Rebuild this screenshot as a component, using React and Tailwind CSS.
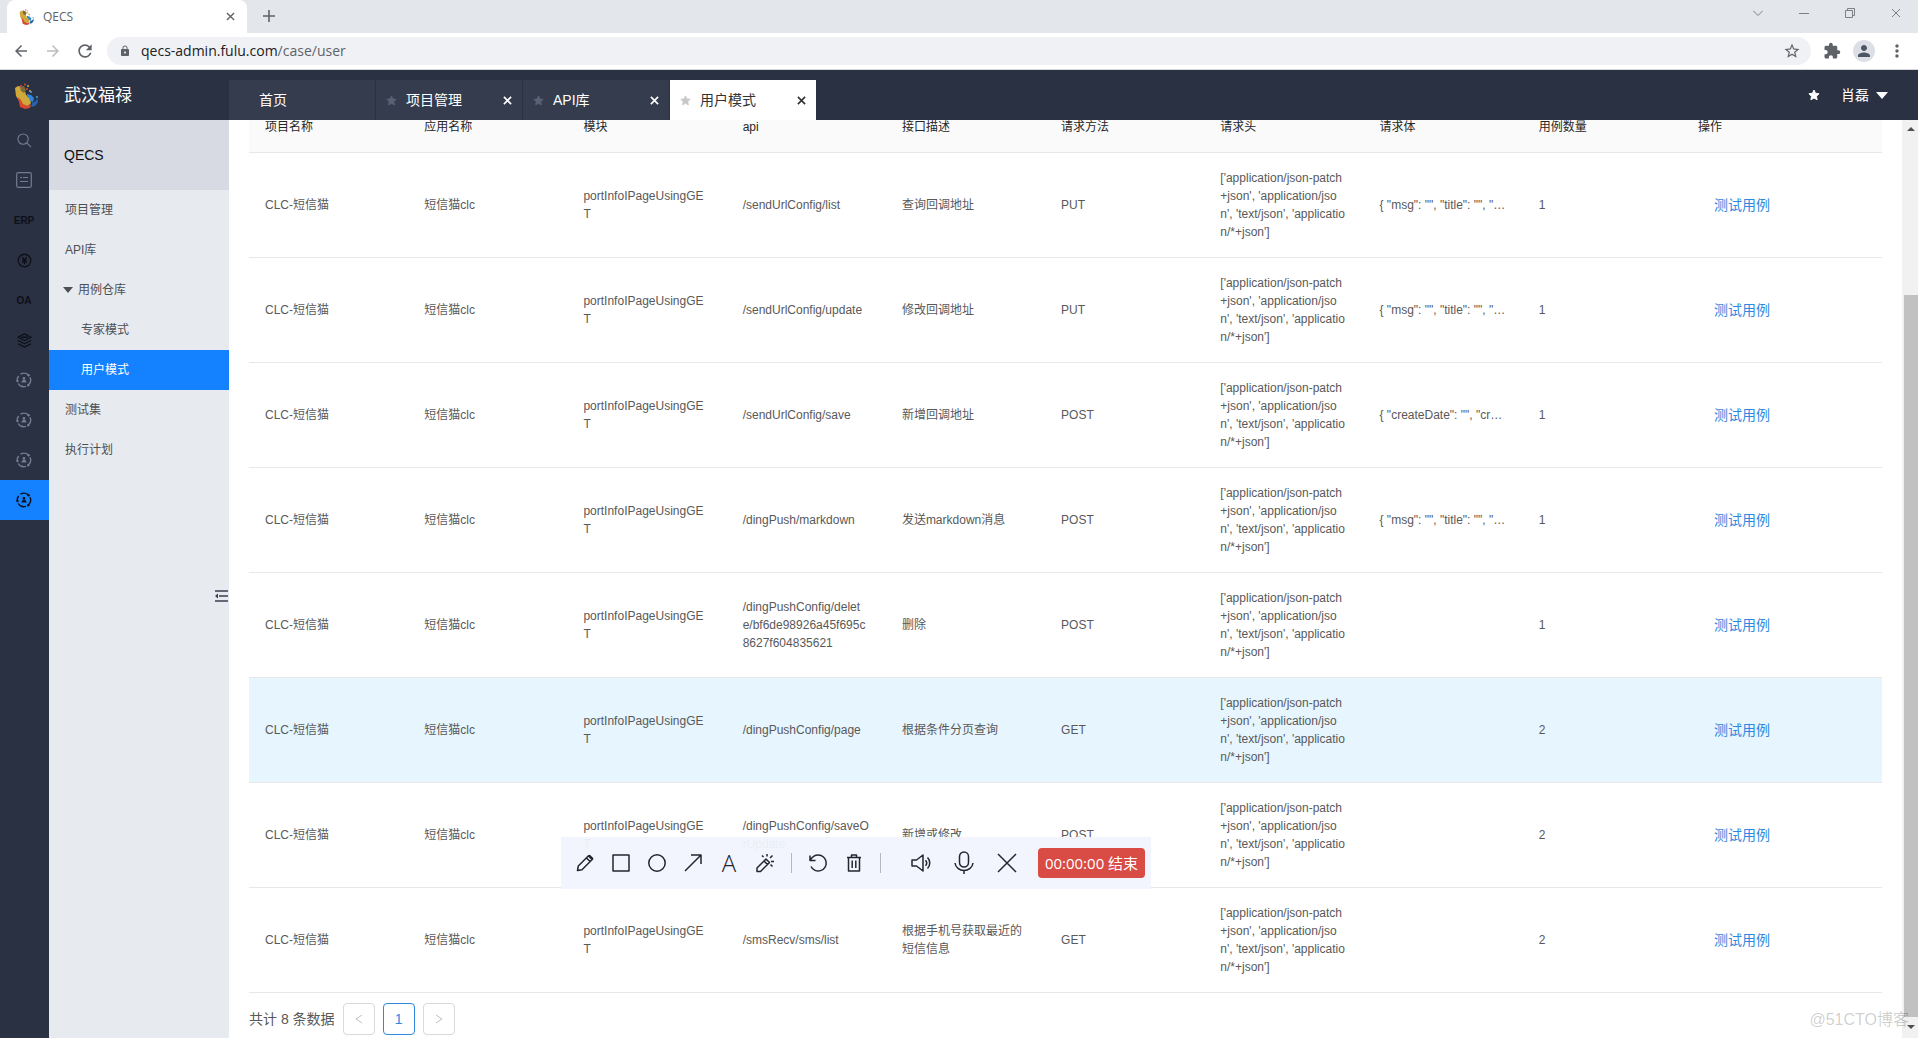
import {
  MdArrowBack,
  MdArrowForward,
  MdRefresh,
  MdLock,
  MdStarBorder,
  MdExtension,
  MdPerson,
  MdMoreVert,
} from "react-icons/md";

const HEADERS = "['application/json-patch+json', 'application/json', 'text/json', 'application/*+json']";
const MSG = '{ "msg": "", "title": "", "…';
const DATE = '{ "createDate": "", "cr…';

const columns = ["项目名称", "应用名称", "模块", "api", "接口描述", "请求方法", "请求头", "请求体", "用例数量", "操作"];

const rows = [
  { api: "/sendUrlConfig/list", desc: "查询回调地址", method: "PUT", body: MSG, count: 1 },
  { api: "/sendUrlConfig/update", desc: "修改回调地址", method: "PUT", body: MSG, count: 1 },
  { api: "/sendUrlConfig/save", desc: "新增回调地址", method: "POST", body: DATE, count: 1 },
  { api: "/dingPush/markdown", desc: "发送markdown消息", method: "POST", body: MSG, count: 1 },
  { api: "/dingPushConfig/delete/bf6de98926a45f695c8627f604835621", desc: "删除", method: "POST", body: "", count: 1 },
  { api: "/dingPushConfig/page", desc: "根据条件分页查询", method: "GET", body: "", count: 2, active: true },
  { api: "/dingPushConfig/saveOrUpdate", desc: "新增或修改", method: "POST", body: "", count: 2 },
  { api: "/smsRecv/sms/list", desc: "根据手机号获取最近的短信信息", method: "GET", body: "", count: 2 },
];

const tabs = [
  { name: "首页" },
  { name: "项目管理", closable: true },
  { name: "API库", closable: true },
  { name: "用户模式", closable: true, active: true },
];

const menu = [
  { name: "项目管理" },
  { name: "API库" },
  { name: "用例仓库", group: true },
  { name: "专家模式", child: true },
  { name: "用户模式", child: true, active: true },
  { name: "测试集" },
  { name: "执行计划" },
];

function Logo({ className }) {
  return (
    <svg viewBox="0 0 26 26" className={className}>
      <path d="M1 5l3-2 4 1 3 4 1 4 4 3 1 5-3 3-5 1-3-5-4-6z" fill="#cfa93a" />
      <path d="M4 14l3 3 2 4 5 2 3-2-1 4-5 1-5-2z" fill="#d9482f" />
      <path d="M6 4l4-1 2 4-2 3-3-2z" fill="#7c6a3c" />
      <path d="M13 11l4 1 3 3-1 4-3-1-1-3-2-1z" fill="#2f86d8" />
      <path d="M18 20l4-2 1-3 1 4-3 4-4 1z" fill="#2564b4" />
      <g fill="#d9482f">
        <circle cx="7" cy="3" r="1" />
        <circle cx="11" cy="1.500" r="1" />
        <circle cx="13" cy="6" r="1" />
      </g>
      <g fill="#e7a03a">
        <circle cx="14" cy="3" r="1" />
        <circle cx="16" cy="8" r="1" />
      </g>
      <g fill="#4a9ae6">
        <circle cx="17" cy="9" r="1" />
        <circle cx="23" cy="14" r="1" />
      </g>
    </svg>
  );
}

function Cross({ className, width = 1.5 }) {
  return (
    <svg viewBox="0 0 10 10" className={className} fill="none" stroke="currentColor" strokeWidth={width}>
      <path d="M1 1l8 8M9 1l-8 8" />
    </svg>
  );
}

function Star({ className }) {
  return (
    <svg viewBox="0 0 24 24" className={className} fill="currentColor" stroke="currentColor" strokeWidth="2" strokeLinejoin="round">
      <path d="M12 2l3 6.500 7 1-5 5 1.200 7L12 18l-6.200 3.500 1.200-7-5-5 7-1z" />
    </svg>
  );
}

function BrowserBar() {
  return (
    <div className="shrink-0 font-['Open_Sans','Noto_Sans_CJK_SC',sans-serif]">
      <div className="flex h-[33px] items-start bg-[#e3e6ea]">
        <div className="ml-[7px] flex h-[33px] w-60 items-center rounded-t-lg bg-white px-3 text-xs text-[#5f6368]">
          <Logo className="mr-2 size-4" />
          <span className="flex-1">QECS</span>
          <button aria-label="关闭标签页" className="text-[#5f6368]">
            <Cross className="size-[9px]" />
          </button>
        </div>
        <button aria-label="新标签页" className="ml-4 flex h-8 items-center text-[#5f6368]">
          <svg viewBox="0 0 12 12" className="size-3" stroke="currentColor" strokeWidth="1.600">
            <path d="M6 0v12M0 6h12" />
          </svg>
        </button>
        <div className="ml-auto flex h-[26px] items-center gap-9 pr-[17px] text-[#7d8084]">
          <svg viewBox="0 0 10 10" className="size-[10px]" fill="none" stroke="currentColor">
            <path d="M0 2.500l5 5 5-5" />
          </svg>
          <svg viewBox="0 0 10 10" className="size-[10px]" stroke="currentColor">
            <path d="M0 5.500h10" />
          </svg>
          <svg viewBox="0 0 10 10" className="size-[10px]" fill="none" stroke="currentColor">
            <path d="M.5 2.500h7v7h-7zM2.500 2.500v-2h7v7h-2" />
          </svg>
          <Cross className="size-[10px]" width={1} />
        </div>
      </div>
      <div className="flex h-[37px] items-center border-b border-[#d5d7da] bg-white pr-[11px] pl-3 text-[#5f6368]">
        <MdArrowBack className="size-[18px]" />
        <MdArrowForward className="ml-[14px] size-[18px] text-[#bbbdc0]" />
        <MdRefresh className="ml-[13px] size-5" />
        <div className="ml-3 flex h-7 flex-1 items-center rounded-full bg-[#eff1f4] pr-[10px] pl-3">
          <MdLock className="size-3" />
          <div className="relative ml-[10px] flex-1 text-sm">
            <span className="text-[#202124]">qecs-admin.fulu.com</span>/case/user
            <input
              aria-label="地址"
              className="absolute inset-0 w-full bg-transparent outline-none"
            />
          </div>
          <MdStarBorder className="size-[18px]" />
        </div>
        <MdExtension className="ml-3 size-[18px]" />
        <span className="ml-3 flex size-[22px] items-center justify-center rounded-full bg-[#dcdfe6]">
          <MdPerson className="size-[18px] text-[#4c5566]" />
        </span>
        <MdMoreVert className="ml-3 size-5" />
      </div>
    </div>
  );
}

function TopBar() {
  return (
    <header className="flex h-[50px] shrink-0 bg-[#293143] text-white">
      <div className="flex w-[229px] items-center pt-[2px] pl-[14px]">
        <Logo className="size-[26px]" />
        <h1 className="ml-6 text-[17px]">武汉福禄</h1>
      </div>
      <nav className="flex items-end">
        {tabs.map((tab) => (
          <div
            key={tab.name}
            className={`flex h-10 w-[147px] items-center border-r border-[#293143] pr-[10px] text-sm ${
              tab.active ? "bg-white text-[#333]" : "bg-[#343c4e]"
            }`}
          >
            {tab.closable ? (
              <Star className={`mr-[9px] ml-[10px] size-[11px] ${tab.active ? "text-[#c8c8c8]" : "text-[#596175]"}`} />
            ) : (
              <span className="ml-[30px]" />
            )}
            <a href="#" className="flex-1">{tab.name}</a>
            {tab.closable && (
              <button aria-label={`关闭${tab.name}`}>
                <Cross className="size-[9px]" width={1.8} />
              </button>
            )}
          </div>
        ))}
      </nav>
      <div className="ml-auto flex items-center pr-[30px] text-sm">
        <Star className="mr-[21px] size-3" />
        <button className="flex items-center gap-[7px]">
          肖磊
          <svg viewBox="0 0 12 7" className="h-[7px] w-3" fill="currentColor">
            <path d="M0 0h12L6 7z" />
          </svg>
        </button>
      </div>
    </header>
  );
}

function SearchIcon() {
  return (
    <svg viewBox="0 0 16 16" className="size-[15px]" fill="none" stroke="currentColor" strokeWidth="1.200">
      <circle cx="6.500" cy="6.500" r="5.500" />
      <path d="M10.500 10.500L15 15" />
    </svg>
  );
}

function FormIcon() {
  return (
    <svg viewBox="0 0 16 16" className="size-4" fill="none" stroke="currentColor" strokeWidth="1.200">
      <rect x=".7" y=".7" width="14.600" height="14.600" rx="1.500" />
      <path d="M4 5.500h2M7 5.500h5M4 9.500h8" />
    </svg>
  );
}

function YenIcon() {
  return (
    <svg viewBox="0 0 16 16" className="size-[15px]" fill="none" stroke="currentColor" strokeWidth="1.400">
      <circle cx="8" cy="8" r="6.700" />
      <path d="M5.500 4.500L8 7.500l2.500-3M8 7.500V12M5.500 8h5M5.500 10h5" />
    </svg>
  );
}

function LayersIcon() {
  return (
    <svg viewBox="0 0 16 16" className="size-[15px]" fill="none" stroke="currentColor" strokeWidth="1.400" strokeLinejoin="round">
      <path d="M8 1l7 3.500L8 8 1 4.500zM4.500 4.500h7" />
      <path d="M1 8l7 3.500L15 8M1 11.500L8 15l7-3.500" />
    </svg>
  );
}

function CycleIcon() {
  return (
    <svg viewBox="0 0 16 16" className="size-4" fill="none" stroke="currentColor" strokeWidth="1.400">
      <path d="M4.500 2.200A6.700 6.700 0 0 1 12 2.600M14 5.200a6.700 6.700 0 0 1-1.600 7.800M10 14.400A6.700 6.700 0 0 1 2.200 11.500M1.300 8.800A6.700 6.700 0 0 1 2.600 4" />
      <g fill="currentColor" stroke="none">
        <circle cx="12.600" cy="3.200" r="1.200" />
        <circle cx="12.200" cy="13.200" r="1.200" />
        <circle cx="1.500" cy="9" r="1.200" />
        <circle cx="8" cy="6.200" r="1.300" />
        <path d="M5.200 10.500L7 7.500h2l1.800 3z" />
      </g>
    </svg>
  );
}

const rail = [
  { label: "搜索", icon: <SearchIcon />, dim: true },
  { label: "表单", icon: <FormIcon />, dim: true },
  { label: "ERP", text: "ERP" },
  { label: "财务", icon: <YenIcon /> },
  { label: "OA", text: "OA" },
  { label: "层级", icon: <LayersIcon /> },
  { label: "任务一", icon: <CycleIcon />, dim: true },
  { label: "任务二", icon: <CycleIcon />, dim: true },
  { label: "任务三", icon: <CycleIcon />, dim: true },
  { label: "测试", icon: <CycleIcon />, active: true },
];

function IconRail() {
  return (
    <nav className="flex w-[49px] shrink-0 flex-col bg-[#293143]">
      {rail.map((item) => (
        <button
          key={item.label}
          aria-label={item.label}
          className={`flex h-10 shrink-0 items-center justify-center pr-px ${item.active ? "bg-[#1482ff]" : ""} ${
            item.dim ? "text-[#747d90]" : "text-[#0d1017]"
          }`}
        >
          {item.icon || (
            <span className="font-['Liberation_Sans_Narrow','Liberation_Sans',sans-serif] text-[10px] font-bold">{item.text}</span>
          )}
        </button>
      ))}
    </nav>
  );
}

function SideMenu() {
  return (
    <aside className="relative w-[180px] shrink-0 bg-[#e7eaef] text-xs">
      <div className="flex h-[70px] items-center bg-[#d7dae2] pl-[15px] text-sm text-[#111]">QECS</div>
      <ul>
        {menu.map((item) => (
          <li key={item.name}>
            <a
              href="#"
              className={`flex h-10 items-center ${item.child ? "pl-8" : item.group ? "pl-[14px]" : "pl-4"} ${
                item.active ? "bg-[#1482ff] text-white" : "text-[#4d4f53]"
              }`}
            >
              {item.group && (
                <svg viewBox="0 0 10 6" className="mr-[5px] h-[6px] w-[10px]" fill="currentColor">
                  <path d="M0 0h10L5 6z" />
                </svg>
              )}
              {item.name}
            </a>
          </li>
        ))}
      </ul>
      <button aria-label="收起菜单" className="absolute top-[470px] right-px text-[#3a3f4d]">
        <svg viewBox="0 0 13 12" className="h-3 w-[13px]" fill="none" stroke="currentColor" strokeWidth="1.500">
          <path d="M0 1h13M4 6h9M0 11h13" />
          <path d="M0 6l3-2.500v5z" fill="currentColor" stroke="none" />
        </svg>
      </button>
    </aside>
  );
}

function CaseTable() {
  return (
    <table className="w-full shrink-0 table-fixed text-left text-xs leading-[18px] text-[#595959]">
      <thead>
        <tr className="border-b border-[#e8e8e8] bg-[#fafafa] text-[#262626]">
          {columns.map((col) => (
            <th key={col} scope="col" className="p-4 font-normal last:w-[200px]">{col}</th>
          ))}
        </tr>
      </thead>
      <tbody>
        {rows.map((row) => (
          <tr key={row.api} className={`border-b border-[#e8e8e8] ${row.active ? "bg-[#e6f5fe]" : ""}`}>
            <td className="p-4">CLC-短信猫</td>
            <td className="p-4">短信猫clc</td>
            <td className="p-4 break-all">portInfoIPageUsingGET</td>
            <td className="p-4 break-all">{row.api}</td>
            <td className="p-4">{row.desc}</td>
            <td className="p-4">{row.method}</td>
            <td className="p-4 break-all">{HEADERS}</td>
            <td className="p-4 whitespace-nowrap">{row.body}</td>
            <td className="p-4">{row.count}</td>
            <td className="p-4">
              <a href="#" className="px-4 text-sm leading-[18px] text-[#2f88e0]">测试用例</a>
            </td>
          </tr>
        ))}
      </tbody>
    </table>
  );
}

function Pagination() {
  return (
    <div className="flex shrink-0 items-center gap-2 pt-[10px] text-sm text-[#595959]">
      <span>共计 8 条数据</span>
      <button aria-label="上一页" className="flex size-8 items-center justify-center rounded border border-[#d9d9d9] text-[#bfbfbf]">
        <svg viewBox="0 0 8 10" className="h-[10px] w-2" fill="none" stroke="currentColor">
          <path d="M7 1L1 5l6 4" />
        </svg>
      </button>
      <button className="size-8 rounded border border-[#2f88e0] text-[#2f88e0]">1</button>
      <button aria-label="下一页" className="flex size-8 items-center justify-center rounded border border-[#d9d9d9] text-[#bfbfbf]">
        <svg viewBox="0 0 8 10" className="h-[10px] w-2" fill="none" stroke="currentColor">
          <path d="M1 1l6 4-6 4" />
        </svg>
      </button>
    </div>
  );
}

function ScrollBar() {
  return (
    <div className="flex w-4 shrink-0 flex-col items-center bg-[#f1f1f1] text-[#505050]">
      <svg viewBox="0 0 16 17" className="h-[17px] w-4" fill="currentColor">
        <path d="M5 11h8L9 7z" />
      </svg>
      <div className="flex w-full flex-1 flex-col justify-end pl-[2px]">
        <div className="h-[82%] bg-[#c1c1c1]" />
      </div>
      <svg viewBox="0 0 16 17" className="h-[21px] w-4" fill="currentColor">
        <path d="M5 6h8l-4 4z" />
      </svg>
    </div>
  );
}

const drawTools = [
  {
    label: "画笔",
    icon: <path d="M1.500 16.500l.8-4.500L12.500 1.800c.5-.5 1-.5 1.500 0l2.200 2.200c.5.500.5 1 0 1.500L6 15.700zM10.500 4l3.500 3.500M12.500 2l3.500 3.500" />,
  },
  { label: "矩形", icon: <rect x="1" y="1" width="16" height="16" /> },
  { label: "椭圆", icon: <circle cx="9" cy="9" r="8.200" /> },
  { label: "箭头", icon: <path d="M1 17L17 1M7 1h10v9" /> },
  { label: "文字", text: "A" },
  {
    label: "魔术笔",
    icon: <path d="M1 14L10 5l3.500 3.500L4.500 17.500H1zM8 7l3.500 3.500M7.500 3L6 1.500M11 2.500V0M14 4l2.500-2.500M15 7.500h3M14.500 10.500l2 2" />,
  },
];

const editTools = [
  { label: "撤销", icon: <path d="M1 1.500v5h5.500M1.200 6.200C2.800 3.200 5.700 1 9.300 1a8 8 0 1 1-7.300 11.500" /> },
  { label: "删除", icon: <path d="M2 3.500h14M6.500 3.500V1h5v2.500M3.500 3.500V17h11V3.500M7.200 6.500v7.500M10.800 6.500v7.500" /> },
];

const mediaTools = [
  {
    label: "声音",
    icon: <path d="M0 6v6h4.500L11 17V1L4.500 6zM13.500 6.200c1.400 1.600 1.400 4 0 5.600M15.500 3.500c3 3 3 8 0 11" />,
  },
  {
    label: "麦克风",
    icon: <path d="M9-2a4.500 4.500 0 0 1 4.500 4.500v6a4.500 4.500 0 0 1-9 0v-6A4.500 4.500 0 0 1 9-2zM0 9c.5 4.500 4.500 7.500 9 7.500s8.500-3 9-7.500M9 16.500V20" />,
  },
  { label: "关闭", icon: <path d="M0 0l18 18M18 0L0 18" /> },
];

function Tool({ tool, wide }) {
  return (
    <button aria-label={tool.label} className={`flex h-full items-center justify-center ${wide ? "w-[43px]" : "w-9"}`}>
      {tool.text ? (
        <span className="font-['Open_Sans',sans-serif] text-2xl font-light">{tool.text}</span>
      ) : (
        <svg viewBox="0 0 18 18" className="size-[18px] overflow-visible" fill="none" stroke="currentColor" strokeWidth="1.500" strokeLinejoin="round">
          {tool.icon}
        </svg>
      )}
    </button>
  );
}

function Recorder() {
  return (
    <div className="absolute top-[837px] left-[561px] flex h-[52px] w-[590px] items-center bg-[#f1f4fd]/95 pr-[6px] pl-[6px] text-[#23262f]">
      {drawTools.map((tool) => (
        <Tool key={tool.label} tool={tool} />
      ))}
      <span className="mx-2 h-5 w-px bg-[#b4b8c4]" />
      {editTools.map((tool) => (
        <Tool key={tool.label} tool={tool} />
      ))}
      <span className="mr-[18px] ml-2 h-5 w-px bg-[#b4b8c4]" />
      {mediaTools.map((tool) => (
        <Tool key={tool.label} tool={tool} wide />
      ))}
      <button className="ml-auto h-[30px] w-[107px] rounded bg-[#d94b45] font-['Open_Sans','Noto_Sans_CJK_SC',sans-serif] text-[15px] text-white">
        00:00:00 结束
      </button>
    </div>
  );
}

export default function App() {
  return (
    <div className="relative flex h-screen flex-col overflow-hidden bg-white font-['Liberation_Sans','Noto_Sans_CJK_SC',sans-serif]">
      <BrowserBar />
      <TopBar />
      <div className="flex min-h-0 flex-1">
        <IconRail />
        <SideMenu />
        <main className="flex min-w-0 flex-1 flex-col justify-end overflow-hidden px-5 pb-[3px]">
          <CaseTable />
          <Pagination />
        </main>
        <ScrollBar />
      </div>
      <Recorder />
      <div className="pointer-events-none absolute right-[9px] bottom-[6px] text-base text-black/20">@51CTO博客</div>
    </div>
  );
}
